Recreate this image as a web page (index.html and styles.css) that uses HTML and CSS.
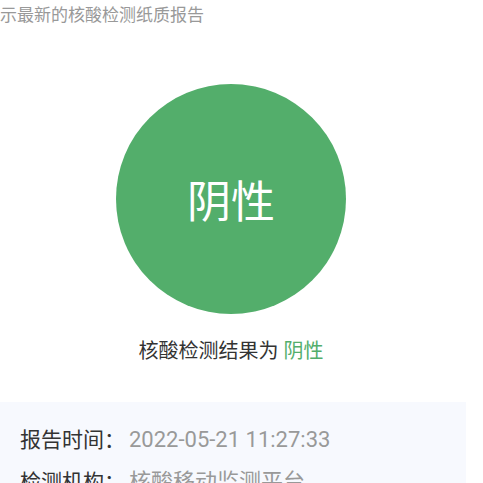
FILE: index.html
```html
<!DOCTYPE html>
<html lang="zh-CN">
<head>
    <meta charset="UTF-8">
    <meta name="viewport" content="width=device-width, initial-scale=1.0">
    <title>核酸检测报告</title>
    <link rel="stylesheet" href="styles.css">
</head>
<body>
    <div class="page">
        <p class="tip">示最新的核酸检测纸质报告</p>
        <div class="circle">阴性</div>
        <p class="result">核酸检测结果为 <span class="green">阴性</span></p>
        <div class="card">
            <div class="row"><span class="label">报告时间：</span><span class="value">2022-05-21 11:27:33</span></div>
            <div class="row"><span class="label">检测机构：</span><span class="value">核酸移动监测平台</span></div>
        </div>
    </div>
</body>
</html>
```

FILE: styles.css
```css
body {
    margin: 0;
    padding: 0;
    background-color: #fff;
    font-family: Roboto, "Noto Sans CJK SC", sans-serif;
    overflow: hidden;
}
.page {
    width: 466px;
}
.tip {
    margin: 0;
    font-size: 17px;
    line-height: 30px;
    color: #999;
}
.circle {
    width: 230px;
    height: 230px;
    margin: 54px 0 0 116px;
    border-radius: 50%;
    background-color: #53ae6b;
    color: #fff;
    font-size: 44px;
    display: flex;
    align-items: center;
    justify-content: center;
}
.result {
    margin: 24px 0 0;
    font-size: 20px;
    line-height: 26px;
    color: #333;
    text-align: center;
    padding-right: 4px;
}
.green {
    color: #53ae6b;
}
.card {
    margin-top: 38px;
    background-color: #f7f9fe;
    padding: 24px 20px 20px;
}
.row {
    font-size: 21px;
    line-height: 28px;
    margin-bottom: 14px;
}
.label {
    color: #333;
}
.value {
    color: #999;
    font-size: 22px;
    margin-left: 4px;
}
```
